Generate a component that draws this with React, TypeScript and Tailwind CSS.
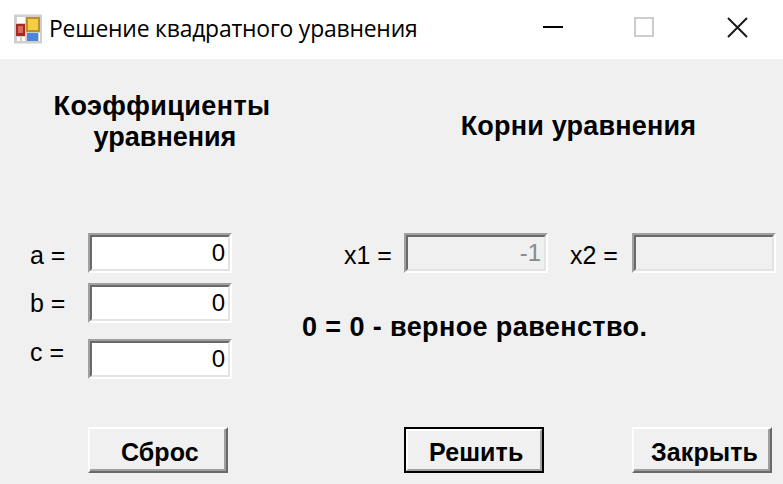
import React from "react";

function Field({ value, disabled, className = "" }: { value: string; disabled?: boolean; className?: string }) {
  return (
    <div className={`w-[144px] h-[40px] border-2 border-t-[#a0a0a0] border-l-[#a0a0a0] border-r-white border-b-white ${className}`}>
      <div
        className={`h-full border-2 border-t-[#696969] border-l-[#696969] border-r-[#e3e3e3] border-b-[#e3e3e3] flex items-center justify-end pr-[3px] text-[24px] leading-none ${
          disabled ? "bg-[#f0f0f0] text-[#8a8a8a]" : "bg-white text-black"
        }`}
      >
        {value}
      </div>
    </div>
  );
}

function Btn({ label, primary, pl, className = "" }: { label: string; primary?: boolean; pl: string; className?: string }) {
  if (primary) {
    return (
      <div className={`w-[140px] h-[46px] border-2 border-black ${className}`}>
        <div className={`h-full border-2 border-t-white border-l-white border-r-[#a0a0a0] border-b-[#a0a0a0] flex items-center pt-[4px] font-bold text-[25px] tracking-[0.1px] leading-none text-black ${pl}`}>
          {label}
        </div>
      </div>
    );
  }
  return (
    <div className={`w-[140px] h-[46px] border-2 border-t-white border-l-white border-r-[#696969] border-b-[#696969] ${className}`}>
      <div className={`h-full border-r-2 border-b-2 border-r-[#a0a0a0] border-b-[#a0a0a0] flex items-center pt-[6px] font-bold text-[25px] tracking-[0.1px] leading-none text-black ${pl}`}>
        {label}
      </div>
    </div>
  );
}

export default function App() {
  return (
    <div className="w-[783px] h-[484px] overflow-hidden bg-[#f0f0f0] font-['Liberation_Sans',Arial,sans-serif] text-black">
      <header className="h-[59px] bg-white flex items-center pl-[14px]">
        <svg width="28" height="30" viewBox="0 0 28 30" className="blur-[0.5px] -mt-[1px]">
          <rect x="0" y="0.5" width="28" height="29" fill="#cfcfcf" />
          <rect x="3" y="3" width="8" height="6" fill="#fff" />
          <rect x="12" y="3" width="14" height="15" fill="#b8902e" />
          <rect x="14" y="5" width="10" height="11" fill="#f7cc45" />
          <rect x="2" y="10" width="9" height="12" fill="#a52a22" />
          <rect x="4" y="12" width="5" height="7" fill="#dc6a5a" />
          <rect x="13" y="19" width="11" height="8" fill="#4b86dc" />
          <rect x="3" y="23" width="3" height="4" fill="#fff" />
          <rect x="8" y="23" width="3" height="4" fill="#fff" />
          <rect x="25" y="19" width="1" height="8" fill="#fff" />
        </svg>
        <span className="ml-[7px] text-[22.9px] leading-none font-['Open_Sans',sans-serif] -mt-[1px] tracking-[-0.2px]">
          Решение квадратного уравнения
        </span>
        <div className="ml-auto flex items-center h-full">
          <svg width="240" height="59" viewBox="0 0 240 59" className="shrink-0">
            <rect x="0" y="26" width="20" height="2" fill="#000" />
            <rect x="92" y="18" width="18" height="18" fill="none" stroke="#cccccc" strokeWidth="2" />
            <path d="M185 18 L204 37 M204 18 L185 37" stroke="#1a1a1a" strokeWidth="2" fill="none" />
          </svg>
        </div>
      </header>

      <main className="h-[425px] flex flex-col">
        <div className="h-[174px] flex font-bold text-[27px] tracking-[0.4px] leading-[31px]">
          <h2 className="w-[324px] pt-[32px] text-center">
            Коэффициенты
            <br />
            <span className="pl-[6px] tracking-[0px]">уравнения</span>
          </h2>
          <h2 className="flex-1 pt-[52px] pl-[50px] text-center tracking-[0.2px]">Корни уравнения</h2>
        </div>

        <div className="h-[194px] flex text-[25px]">
          <div className="w-[302px] shrink-0 flex flex-col pl-[30px]">
            <div className="flex items-center h-[40px]">
              <span className="w-[58px] leading-none mt-[4px]">a =</span>
              <Field value="0" />
            </div>
            <div className="flex items-center h-[40px] mt-[10px]">
              <span className="w-[58px] leading-none mt-[1px]">b =</span>
              <Field value="0" />
            </div>
            <div className="flex items-center h-[40px] mt-[16px]">
              <span className="w-[58px] leading-none -mt-[14px]">c =</span>
              <Field value="0" />
            </div>
          </div>
          <div className="flex-1 flex flex-col">
            <div className="flex items-center h-[40px]">
              <span className="ml-[42px] w-[60px] leading-none mt-[5px]">x1 =</span>
              <Field value="-1" disabled />
              <span className="ml-[22px] w-[62px] leading-none mt-[5px]">x2 =</span>
              <Field value="" disabled />
            </div>
            <p className="mt-[39px] font-bold text-[27px] tracking-[0.4px] leading-[31px]">0 = 0 - верное равенство.</p>
          </div>
        </div>

        <div className="flex pl-[88px]">
          <Btn label="Сброс" pl="pl-[31px]" />
          <Btn label="Решить" primary pl="pl-[21px]" className="ml-[176px]" />
          <Btn label="Закрыть" pl="pl-[17px]" className="ml-[88px]" />
        </div>
      </main>
    </div>
  );
}
